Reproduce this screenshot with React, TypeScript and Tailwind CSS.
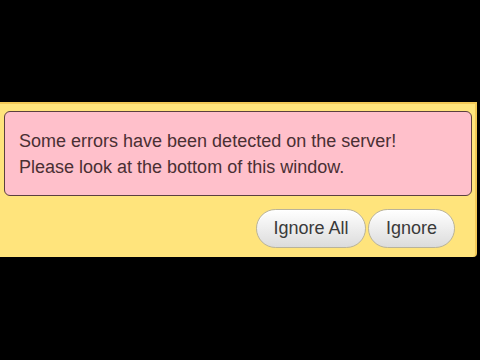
export default function App() {
  return (
    <div className="w-[480px] h-[360px] bg-black overflow-hidden" style={{ fontFamily: '"Liberation Sans", Arial, sans-serif' }}>
      <div className="mt-[102px] w-[477px] h-[155px] bg-[#ffe47c] border-t-2 border-r-2 border-[#f3c957] rounded-br-[4px] pt-[7px] pl-[4px]">
        <div className="w-[468px] h-[85px] bg-[#ffc0cb] border border-[#5b4040] rounded-[6px] pl-[14px] pt-[16px] text-[18px] leading-[26px] text-[#4a2f33]">
          <div>Some errors have been detected on the server!</div>
          <div>Please look at the bottom of this window.</div>
        </div>
        <div className="flex justify-end gap-[2px] mt-[13px] pr-[20px]">
          <button className="w-[110px] h-[39px] rounded-full border border-[#b9b39a] bg-gradient-to-b from-[#ffffff] to-[#dcdcdc] text-[18px] text-[#3a3a3a] shadow-[inset_0_1px_0_#ffffff]">
            Ignore All
          </button>
          <button className="w-[87px] h-[39px] rounded-full border border-[#b9b39a] bg-gradient-to-b from-[#ffffff] to-[#dcdcdc] text-[18px] text-[#3a3a3a] shadow-[inset_0_1px_0_#ffffff]">
            Ignore
          </button>
        </div>
      </div>
    </div>
  )
}
